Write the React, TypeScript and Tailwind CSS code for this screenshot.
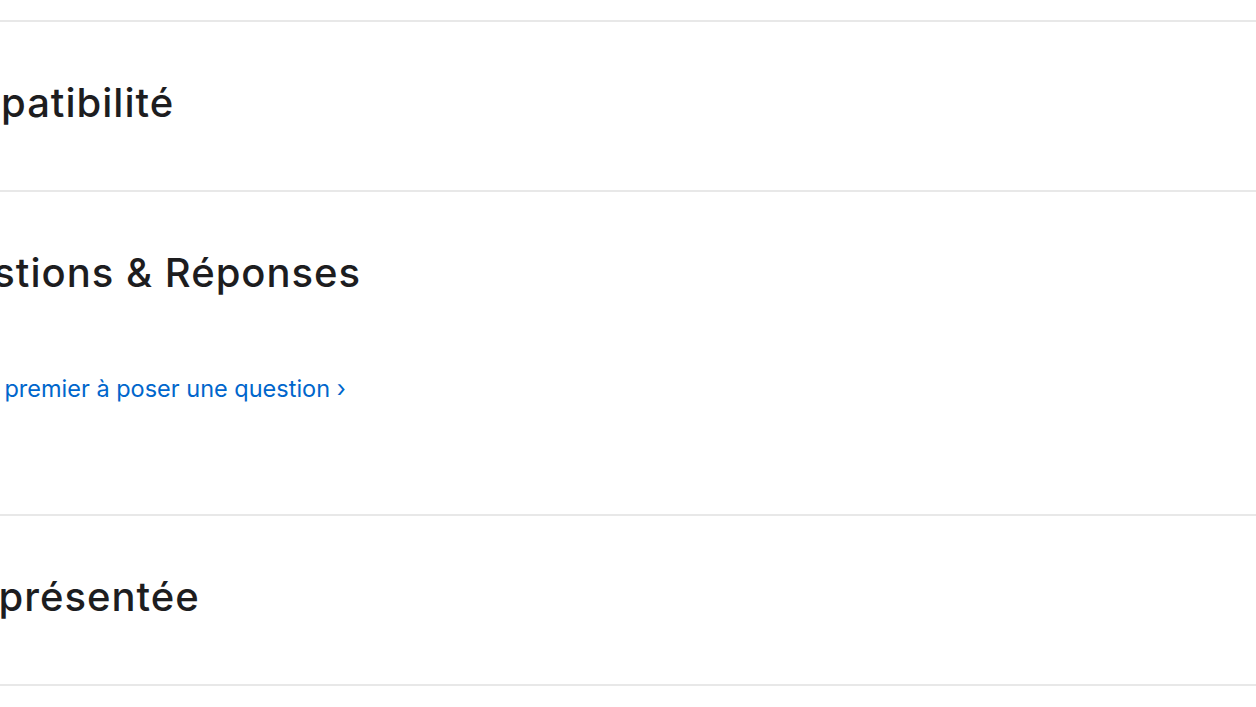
import React from 'react';

const Section: React.FC<{
  title: string;
  children?: React.ReactNode;
  className?: string;
  titleClassName?: string;
}> = ({ title, children, className = '', titleClassName = '' }) => (
  <section className={`border-t-2 border-[#e8e8e8] pt-[59px] ${className}`}>
    <h2
      className={`text-[40px] leading-[44px] font-medium tracking-[1px] text-[#1d1d1f] whitespace-nowrap ${titleClassName}`}
    >
      {title}
    </h2>
    {children}
  </section>
);

const App: React.FC = () => {
  return (
    <div className="w-[1256px] h-[707px] overflow-hidden bg-white font-['Inter','Noto_Sans',sans-serif]">
      <div className="pt-5 ml-[-88px]">
        <Section title="Compatibilité" className="pb-[65px]" titleClassName="-ml-[3px]" />
        <Section title="Questions & Réponses" className="pb-[111px]">
          <a
            href="#"
            className="mt-[80px] -ml-2 block text-[23.5px] leading-[28px] text-[#0066cc] whitespace-nowrap"
          >
            Soyez le premier à poser une question ›
          </a>
        </Section>
        <Section title="App présentée" className="pb-[65px]" titleClassName="-ml-[6px]" />
        <div className="border-t-2 border-[#e8e8e8] h-10" />
      </div>
    </div>
  );
};

export default App;
